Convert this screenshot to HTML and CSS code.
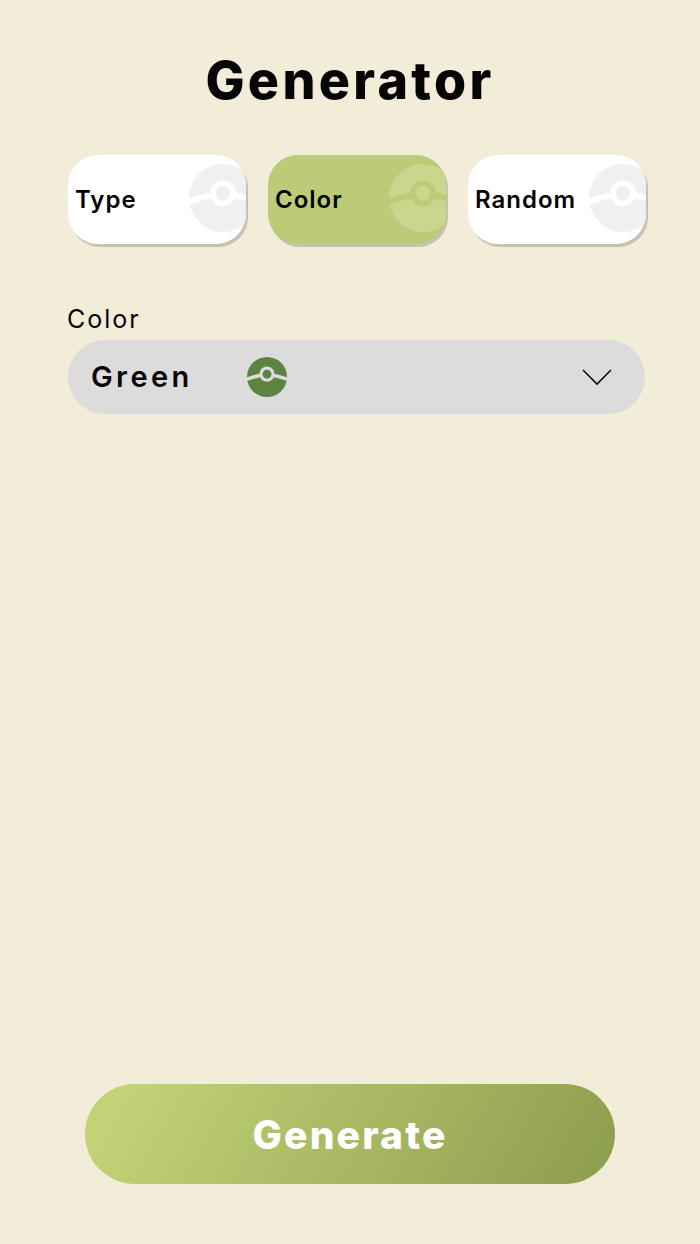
FILE: index.html
```html
<!DOCTYPE html>
<html>
  <head>
    <meta http-equiv="Content-Type" content="text/html; charset=UTF-8" />
    <meta name="viewport" content="width=device-width, initial-scale=1" />
    <title>Generator</title>
    <link rel="stylesheet" href="styles.css">
  </head>

  <body>
    <svg class="icon-defs" width="0" height="0">
      <defs>
        <mask id="ball-mask">
          <circle cx="50" cy="50" r="50" fill="white" />
          <path d="M-2 56 Q18 49 38 45 L62 45 Q82 49 102 56" fill="none" stroke="black" stroke-width="9" />
          <circle cx="50" cy="43" r="19" fill="black" />
          <circle cx="50" cy="43" r="11" fill="white" />
        </mask>
        <symbol id="ball" viewBox="0 0 100 100">
          <rect width="100" height="100" fill="currentColor" mask="url(#ball-mask)" />
        </symbol>
      </defs>
    </svg>

    <main class="page">
      <h1>Generator</h1>

      <div class="tabs">
        <button class="tab">
          <span>Type</span>
          <svg class="tab-ball"><use href="#ball" /></svg>
        </button>
        <button class="tab active">
          <span>Color</span>
          <svg class="tab-ball"><use href="#ball" /></svg>
        </button>
        <button class="tab">
          <span>Random</span>
          <svg class="tab-ball"><use href="#ball" /></svg>
        </button>
      </div>

      <div class="field">
        <label class="field-label">Color</label>
        <div class="select">
          <span class="select-value">Green</span>
          <svg class="select-ball"><use href="#ball" /></svg>
          <svg class="chevron" viewBox="0 0 30 17">
            <path d="M1 1 L15 15 L29 1" fill="none" stroke="#111" stroke-width="1.6" />
          </svg>
        </div>
      </div>

      <button class="generate">Generate</button>
    </main>
  </body>
</html>
```

FILE: styles.css
```css
body {
  background-color: #f2edd9;
  color: #050505;
  font-family: Inter, "Open Sans", sans-serif;
  margin: 0;
}

.icon-defs {
  position: absolute;
}

.page {
  box-sizing: border-box;
  height: 1244px;
  padding: 51px 54px 60px 68px;
  display: flex;
  flex-direction: column;
}

h1 {
  font-size: 52px;
  font-weight: 800;
  line-height: 60px;
  letter-spacing: 3.3px;
  text-align: center;
  margin: 0 0 44px -14px;
}

.tabs {
  display: flex;
  justify-content: space-between;
}

.tab {
  position: relative;
  overflow: hidden;
  width: 178px;
  height: 89px;
  border: none;
  border-radius: 30px;
  background-color: white;
  color: #050505;
  font-family: inherit;
  font-size: 24px;
  font-weight: 600;
  letter-spacing: 1px;
  padding: 0 0 0 7px;
  text-align: left;
  box-shadow: 2px 3px 0 #c6c2b0;
}

.tab span {
  position: relative;
  z-index: 1;
}

.tab-ball {
  position: absolute;
  left: 121px;
  top: 9px;
  width: 68px;
  height: 68px;
  color: #f0f0f0;
}

.tab.active {
  background-color: #bccb77;
}

.tab.active .tab-ball {
  color: #c8d68e;
}

.field {
  margin-top: 59px;
}

.field-label {
  display: block;
  font-size: 25px;
  line-height: 32px;
  letter-spacing: 2px;
  margin-left: -1px;
  margin-bottom: 5px;
}

.select {
  display: flex;
  align-items: center;
  height: 74px;
  margin-right: 1px;
  border-radius: 37px;
  background-color: #dcdcdc;
  padding-left: 23px;
  padding-right: 33px;
}

.select-value {
  width: 156px;
  font-size: 29px;
  font-weight: 600;
  letter-spacing: 3.4px;
  margin-top: -2px;
}

.select-ball {
  width: 40px;
  height: 40px;
  color: #5d8343;
}

.chevron {
  width: 30px;
  height: 17px;
  margin-left: auto;
}

.generate {
  align-self: center;
  width: 530px;
  height: 100px;
  margin-top: auto;
  margin-left: -14px;
  border: none;
  border-radius: 50px;
  background: linear-gradient(120deg, #c2d276 8%, #8f9f50 95%);
  color: white;
  font-family: inherit;
  font-size: 39px;
  font-weight: 800;
  letter-spacing: 2.2px;
}
```
